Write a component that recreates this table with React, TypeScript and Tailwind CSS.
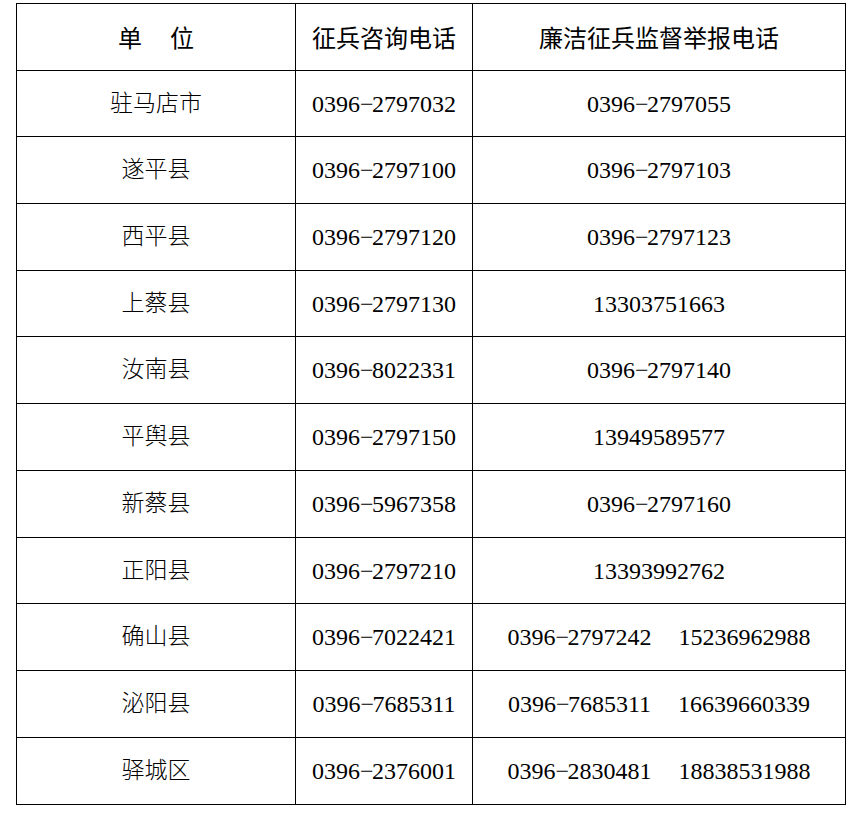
import React from "react";

type Row = { unit: string; consult: string; report: string[] };

const rows: Row[] = [
  { unit: "驻马店市", consult: "0396-2797032", report: ["0396-2797055"] },
  { unit: "遂平县", consult: "0396-2797100", report: ["0396-2797103"] },
  { unit: "西平县", consult: "0396-2797120", report: ["0396-2797123"] },
  { unit: "上蔡县", consult: "0396-2797130", report: ["13303751663"] },
  { unit: "汝南县", consult: "0396-8022331", report: ["0396-2797140"] },
  { unit: "平舆县", consult: "0396-2797150", report: ["13949589577"] },
  { unit: "新蔡县", consult: "0396-5967358", report: ["0396-2797160"] },
  { unit: "正阳县", consult: "0396-2797210", report: ["13393992762"] },
  { unit: "确山县", consult: "0396-7022421", report: ["0396-2797242", "15236962988"] },
  { unit: "泌阳县", consult: "0396-7685311", report: ["0396-7685311", "16639660339"] },
  { unit: "驿城区", consult: "0396-2376001", report: ["0396-2830481", "18838531988"] },
];

const heights = [66, 67, 67, 66, 67, 67, 67, 66, 67, 67, 67];

function Num({ v }: { v: string }) {
  const parts = v.split("-");
  if (parts.length === 1) return <span>{v}</span>;
  return (
    <span>
      {parts[0]}
      <span className="inline-block w-[12px] text-center">−</span>
      {parts[1]}
    </span>
  );
}

const font = { fontFamily: "'Liberation Serif', 'Noto Sans CJK SC', serif" };

export default function App() {
  return (
    <div className="bg-white w-[862px] h-[813px] pt-[3px] pl-[16px] text-black" style={font}>
      <div className="w-[830px] border-l border-t border-black">
        <div className="flex h-[67px]">
          <div className="w-[279px] border-r border-b border-black flex items-center justify-center text-[24px] font-normal [font-family:'Noto_Sans_CJK_SC',sans-serif]">
            <span>单</span>
            <span className="inline-block w-[28px]" />
            <span>位</span>
          </div>
          <div className="w-[177px] border-r border-b border-black flex items-center justify-center text-[24px] font-normal [font-family:'Noto_Sans_CJK_SC',sans-serif]">
            征兵咨询电话
          </div>
          <div className="w-[373px] border-r border-b border-black flex items-center justify-center text-[24px] font-normal [font-family:'Noto_Sans_CJK_SC',sans-serif]">
            廉洁征兵监督举报电话
          </div>
        </div>
        {rows.map((r, i) => (
          <div key={r.unit} className="flex" style={{ height: heights[i] }}>
            <div className="w-[279px] border-r border-b border-black flex items-center justify-center text-[23px] font-light pb-[5px] [font-family:'Noto_Sans_CJK_SC',sans-serif]">
              {r.unit}
            </div>
            <div className="w-[177px] border-r border-b border-black flex items-center justify-center text-[24px]">
              <Num v={r.consult} />
            </div>
            <div className="w-[373px] border-r border-b border-black flex items-center justify-center text-[24px] gap-[27px]">
              {r.report.map((n) => (
                <Num key={n} v={n} />
              ))}
            </div>
          </div>
        ))}
      </div>
    </div>
  );
}
